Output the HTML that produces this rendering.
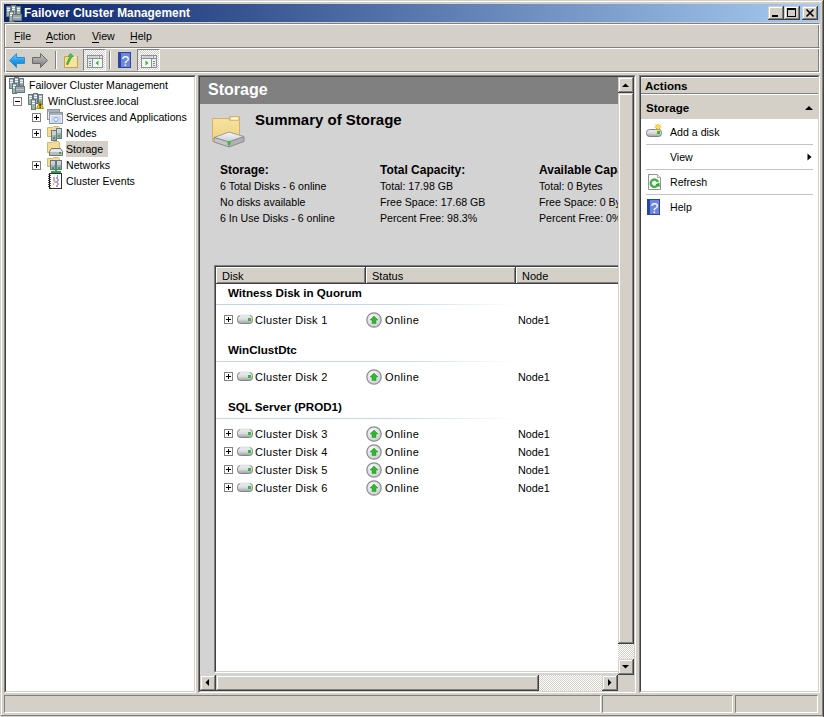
<!DOCTYPE html>
<html><head><meta charset="utf-8">
<style>
*{margin:0;padding:0;box-sizing:border-box}
html,body{width:824px;height:717px;overflow:hidden;background:#D4D0C8;font-family:"Liberation Sans",sans-serif;font-size:10.6px;color:#000}
.a{position:absolute}
.t{position:absolute;white-space:nowrap;line-height:12px}
.b{font-weight:bold;font-size:11.6px}
svg{position:absolute;overflow:visible}
.sunk{position:absolute;border:1px solid;border-color:#808080 #fff #fff #808080}
.sunk>.in{position:absolute;left:0;top:0;right:0;bottom:0;border:1px solid;border-color:#404040 #D4D0C8 #D4D0C8 #404040}
.btn{position:absolute;background:#D4D0C8;box-shadow:inset -1px -1px #404040,inset 1px 1px #D4D0C8,inset -2px -2px #808080,inset 2px 2px #fff}
.dith{background-color:#fff;background-image:linear-gradient(45deg,#D4D0C8 25%,transparent 25%,transparent 75%,#D4D0C8 75%),linear-gradient(45deg,#D4D0C8 25%,transparent 25%,transparent 75%,#D4D0C8 75%);background-size:2px 2px;background-position:0 0,1px 1px}
</style></head><body>
<!-- window frame -->
<div class="a" style="left:1px;top:1px;width:821px;height:1px;background:#fff"></div>
<div class="a" style="left:1px;top:1px;width:1px;height:714px;background:#fff"></div>
<div class="a" style="left:822px;top:1px;width:1px;height:715px;background:#808080"></div>
<div class="a" style="left:823px;top:0;width:1px;height:717px;background:#404040"></div>
<div class="a" style="left:1px;top:715px;width:822px;height:1px;background:#808080"></div>
<!-- title bar -->
<div class="a" style="left:4px;top:4px;width:816px;height:18px;background:linear-gradient(to right,#0A246A,#A6CAF0)"></div>
<div class="t" style="left:24px;top:5px;color:#fff;font-weight:bold;font-size:11.9px;line-height:16px">Failover Cluster Management</div>
<div class="btn" style="left:768px;top:6px;width:16px;height:14px"></div>
<div class="a" style="left:772px;top:15px;width:6px;height:2px;background:#000"></div>
<div class="btn" style="left:784px;top:6px;width:16px;height:14px"></div>
<div class="a" style="left:787px;top:8px;width:9px;height:9px;border:1px solid #000;border-top-width:2px"></div>
<div class="btn" style="left:802px;top:6px;width:16px;height:14px"></div>
<svg style="left:802px;top:6px" width="16" height="14"><path d="M4.5 3.5 L11.5 10.5 M11.5 3.5 L4.5 10.5" stroke="#000" stroke-width="1.6"/></svg>
<!-- title icon -->
<svg style="left:6px;top:5px" width="16" height="16">
<use href="#tower" x="0" y="1"/><use href="#tower" x="5" y="0"/><use href="#tower" x="10" y="1"/>
<use href="#tower" x="3" y="6"/>
<rect x="6.5" y="9.5" width="9" height="6" fill="#98A4AC" stroke="#687880"/>
<path d="M7 12.5h8" stroke="#C0C8CC"/>
</svg>
<!-- menu -->
<div class="t" style="left:14px;top:30px">File</div>
<div class="t" style="left:46px;top:30px">Action</div>
<div class="t" style="left:92px;top:30px">View</div>
<div class="t" style="left:130px;top:30px">Help</div>
<div class="a" style="left:14px;top:42px;width:6px;height:1px;background:#000"></div>
<div class="a" style="left:46px;top:42px;width:7px;height:1px;background:#000"></div>
<div class="a" style="left:92px;top:42px;width:7px;height:1px;background:#000"></div>
<div class="a" style="left:130px;top:42px;width:7px;height:1px;background:#000"></div>

<!-- menu band -->
<div class="a" style="left:4px;top:23px;width:816px;height:26px;border:1px solid;border-color:#808080 #fff #fff #808080;box-shadow:inset 1px 1px #fff,inset -1px -1px #808080"></div>
<div class="a" style="left:4px;top:47px;width:816px;height:26px;border:1px solid;border-color:#808080 #fff #fff #808080;box-shadow:inset 1px 1px #fff,inset -1px -1px #808080"></div>

<!-- toolbar -->
<svg style="left:0;top:0" width="1" height="1"><defs>
<linearGradient id="gblue" x1="0" y1="0" x2="0" y2="1"><stop offset="0" stop-color="#7CCBF5"/><stop offset="0.5" stop-color="#22A0EC"/><stop offset="1" stop-color="#0A70C8"/></linearGradient>
<linearGradient id="ggray" x1="0" y1="0" x2="0" y2="1"><stop offset="0" stop-color="#C8C8C8"/><stop offset="0.6" stop-color="#989898"/><stop offset="1" stop-color="#7A7A7A"/></linearGradient>
</defs></svg>
<svg style="left:0;top:0" width="824" height="80">
<path d="M9.5 60.5 L16.5 53.5 L16.5 57.5 L24.5 57.5 L24.5 63.5 L16.5 63.5 L16.5 67.5 Z" fill="url(#gblue)" stroke="#2F8FD8" stroke-width="1"/>
<path d="M47.5 60.5 L40.5 53.5 L40.5 57.5 L32.5 57.5 L32.5 63.5 L40.5 63.5 L40.5 67.5 Z" fill="url(#ggray)" stroke="#6A6A6A" stroke-width="1"/>
<rect x="55" y="51" width="1" height="18" fill="#808080"/><rect x="56" y="51" width="1" height="18" fill="#fff"/>
<rect x="109" y="51" width="1" height="18" fill="#808080"/><rect x="110" y="51" width="1" height="18" fill="#fff"/>
<!-- folder up -->
<path d="M64.5 56.5 L77.5 56.5 L77.5 67.5 L64.5 67.5 Z" fill="#F2D68A" stroke="#C8A050"/>
<path d="M65 59.5 L71 59.5 L72 58.5 L77 58.5 L77 67 L65 67 Z" fill="#F8E2A0"/>
<rect x="72.5" y="56" width="4" height="2" fill="#E8ECEC"/>
<path d="M66.5 64 C67.5 61 68.5 59 69.5 57.5 L68.5 56 L70.5 53.5 L73.5 56.5 L71.5 57 C70.5 59.5 69 62.5 67.5 65 Z" fill="#48C848" stroke="#2A9A2A" stroke-width="0.7"/>
<!-- help -->
<rect x="118" y="52" width="13" height="16" fill="#2A44A8"/>
<rect x="121" y="53" width="9" height="14" fill="#6C86DA"/>
<text x="125.5" y="66" font-family="Liberation Sans" font-size="14" fill="#fff" text-anchor="middle">?</text>
</svg>
<div class="a dith" style="left:83px;top:49px;width:23px;height:22px;border:1px solid;border-color:#808080 #fff #fff #808080"></div>
<div class="a dith" style="left:137px;top:49px;width:23px;height:22px;border:1px solid;border-color:#808080 #fff #fff #808080"></div>
<svg style="left:87px;top:55px" width="16" height="13">
<rect x="0.5" y="0.5" width="15" height="12" fill="#E8EAEC" stroke="#8C9196"/>
<rect x="1" y="3" width="14" height="1" fill="#8C9196"/>
<rect x="2" y="1.5" width="9" height="1" fill="#B8BCC0"/><rect x="12" y="1" width="1" height="2" fill="#8C9196"/>
<rect x="5" y="4" width="1" height="8" fill="#8C9196"/>
<rect x="2" y="6" width="2" height="1" fill="#8C9196"/><rect x="2" y="8" width="2" height="1" fill="#8C9196"/><rect x="2" y="10" width="2" height="1" fill="#8C9196"/>
<rect x="6" y="4" width="9" height="8" fill="#F4F8F4"/>
<path d="M8.5 8 L11.5 5.5 L11.5 10.5 Z" fill="#40B040"/>
</svg>
<svg style="left:141px;top:55px" width="16" height="13">
<rect x="0.5" y="0.5" width="15" height="12" fill="#E8EAEC" stroke="#8C9196"/>
<rect x="1" y="3" width="14" height="1" fill="#8C9196"/>
<rect x="2" y="1.5" width="9" height="1" fill="#B8BCC0"/><rect x="12" y="1" width="1" height="2" fill="#8C9196"/>
<rect x="10" y="4" width="1" height="8" fill="#8C9196"/>
<rect x="12" y="6" width="2" height="1" fill="#8C9196"/><rect x="12" y="8" width="2" height="1" fill="#8C9196"/><rect x="12" y="10" width="2" height="1" fill="#8C9196"/>
<rect x="1" y="4" width="9" height="8" fill="#F4F8F4"/>
<path d="M7.5 8 L4.5 5.5 L4.5 10.5 Z" fill="#40B040"/>
</svg>
<!-- left pane -->
<div class="sunk" style="left:4px;top:75px;width:192px;height:618px"><div class="in" style="background:#fff"></div></div>
<!-- tree -->
<svg style="left:0;top:0" width="1" height="1"><defs>
<linearGradient id="twr" x1="0" y1="0" x2="1" y2="1"><stop offset="0" stop-color="#B8C4C8"/><stop offset="1" stop-color="#8C9CA4"/></linearGradient>
<g id="tower"><rect x="0.5" y="0.5" width="4" height="10" fill="url(#twr)" stroke="#687880"/><path d="M1 2.5h3M1 4.5h3" stroke="#F4F8F8"/><rect x="1" y="7" width="3" height="3" fill="#98B898"/></g>
</defs></svg>
<svg style="left:9px;top:77px" width="16" height="16">
<use href="#tower" x="0" y="1"/><use href="#tower" x="5" y="0"/><use href="#tower" x="10" y="1"/>
<use href="#tower" x="3" y="6"/>
<rect x="6.5" y="9.5" width="9" height="6" fill="#98A4AC" stroke="#687880"/>
<path d="M8 9.5 L9.5 8 L12.5 8 L14 9.5" fill="none" stroke="#687880"/>
<path d="M7 12.5h8" stroke="#C0C8CC"/>
</svg>
<div class="t" style="left:29px;top:79px">Failover Cluster Management</div>
<div class="a" style="left:13px;top:97px;width:9px;height:9px;border:1px solid #808080;background:#fff"></div>
<div class="a" style="left:15px;top:101px;width:5px;height:1px;background:#000"></div>
<svg style="left:28px;top:93px" width="16" height="16">
<use href="#tower" x="0" y="1"/><use href="#tower" x="5" y="0"/><use href="#tower" x="10" y="1"/>
<use href="#tower" x="3" y="6"/>
<path d="M8.5 15.5 L12 8.5 L15.5 15.5 Z" fill="#F0D830" stroke="#B09000"/>
<rect x="11.5" y="10.5" width="1.2" height="3" fill="#000"/><rect x="11.5" y="14" width="1.2" height="1" fill="#000"/>
</svg>
<div class="t" style="left:48px;top:95px">WinClust.sree.local</div>
<div class="a" style="left:32px;top:113px;width:9px;height:9px;border:1px solid #808080;background:#fff"></div>
<div class="a" style="left:34px;top:117px;width:5px;height:1px;background:#000"></div><div class="a" style="left:36px;top:115px;width:1px;height:5px;background:#000"></div>
<svg style="left:47px;top:109px" width="16" height="16">
<rect x="0.5" y="0.5" width="12" height="10" fill="#E4E8EC" stroke="#8C949C"/>
<rect x="1" y="1" width="11" height="2" fill="#A8B0B8"/>
<rect x="2.5" y="3.5" width="13" height="11" fill="#EEF2F6" stroke="#8C949C"/>
<rect x="3" y="4" width="12" height="2" fill="#A8B0B8"/>
<rect x="4" y="7" width="10" height="7" fill="#C8D8F0"/>
<path d="M9 8 L11 10.5 L9 13 L7 10.5 Z" fill="#fff" stroke="#6890C8" stroke-width="0.8"/>
</svg>
<div class="t" style="left:66px;top:111px">Services and Applications</div>
<div class="a" style="left:32px;top:129px;width:9px;height:9px;border:1px solid #808080;background:#fff"></div>
<div class="a" style="left:34px;top:133px;width:5px;height:1px;background:#000"></div><div class="a" style="left:36px;top:131px;width:1px;height:5px;background:#000"></div>
<svg style="left:47px;top:125px" width="16" height="16">
<path d="M0.5 2.5 L5.5 2.5 L6.5 1.5 L11.5 1.5 L12.5 2.5 L12.5 11.5 L0.5 11.5 Z" fill="#F4DC98" stroke="#D8B868"/>
<rect x="4.5" y="5.5" width="5" height="10" fill="url(#twr)" stroke="#687880"/>
<rect x="9.5" y="3.5" width="5" height="10" fill="url(#twr)" stroke="#687880"/>
<path d="M5 7h4M10 5h4M5 9h4M10 7h4" stroke="#F0F0F0"/>
<rect x="6" y="12" width="2" height="2" fill="#30B030"/><rect x="11" y="10" width="2" height="2" fill="#30B030"/>
</svg>
<div class="t" style="left:66px;top:127px">Nodes</div>
<div class="a" style="left:66px;top:141px;width:42px;height:16px;background:#D4D0C8"></div>
<svg style="left:47px;top:141px" width="16" height="16">
<path d="M0.5 1.5 L5.5 1.5 L6.5 0.5 L11.5 0.5 L12.5 1.5 L12.5 11.5 L0.5 11.5 Z" fill="#F4DC98" stroke="#D8B868"/>
<path d="M2.5 10.5 L4.5 7.5 L13.5 7.5 L15.5 10.5 L15.5 14.5 L2.5 14.5 Z" fill="#E4E6E8" stroke="#70747A"/>
<rect x="3" y="11" width="12" height="3" fill="#B8BCC0"/>
<rect x="12" y="11" width="2" height="2" fill="#30B030"/>
</svg>
<div class="t" style="left:66px;top:143px">Storage</div>
<div class="a" style="left:32px;top:161px;width:9px;height:9px;border:1px solid #808080;background:#fff"></div>
<div class="a" style="left:34px;top:165px;width:5px;height:1px;background:#000"></div><div class="a" style="left:36px;top:163px;width:1px;height:5px;background:#000"></div>
<svg style="left:47px;top:157px" width="16" height="16">
<path d="M0.5 1.5 L5.5 1.5 L6.5 0.5 L11.5 0.5 L12.5 1.5 L12.5 9.5 L0.5 9.5 Z" fill="#F4DC98" stroke="#D8B868"/>
<rect x="3.5" y="3.5" width="5" height="9" fill="url(#twr)" stroke="#687880"/>
<rect x="9.5" y="3.5" width="5" height="9" fill="url(#twr)" stroke="#687880"/>
<path d="M4 5h4M10 5h4M4 7h4M10 7h4" stroke="#F0F0F0"/>
<rect x="5" y="10" width="2" height="2" fill="#30B030"/><rect x="11" y="10" width="2" height="2" fill="#30B030"/>
<rect x="8" y="12" width="2" height="3" fill="#30A050"/><rect x="4" y="14" width="10" height="2" fill="#30A050"/>
</svg>
<div class="t" style="left:66px;top:159px">Networks</div>
<svg style="left:47px;top:173px" width="16" height="16">
<rect x="2.5" y="0.5" width="12" height="15" fill="#fff" stroke="#303030"/>
<path d="M1.5 1.5 L3.5 2.5 L1.5 3.5 L3.5 4.5 L1.5 5.5 L3.5 6.5 L1.5 7.5 L3.5 8.5 L1.5 9.5 L3.5 10.5 L1.5 11.5 L3.5 12.5 L1.5 13.5 L3.5 14.5" stroke="#101010" fill="none"/>
<path d="M6 5h2M6 7h2M7 9h2M6 11h1" stroke="#D04848"/>
<path d="M10 3h1M9 5h2M10 7h2" stroke="#3048C8"/>
<path d="M9 9h2M10 11h2M9 13h2" stroke="#8030A0"/>
</svg>
<div class="t" style="left:66px;top:175px">Cluster Events</div>
<!-- center pane -->
<div class="sunk" style="left:198px;top:75px;width:438px;height:618px"><div class="in" style="background:#D3D3D3"></div></div>
<!-- center content -->
<div class="a" style="left:200px;top:77px;width:418px;height:27px;background:#808080"></div>
<div class="t" style="left:208px;top:81px;color:#fff;font-weight:bold;font-size:16px;line-height:18px">Storage</div>
<svg style="left:212px;top:114px" width="32" height="34">
<defs><linearGradient id="fold" x1="0" y1="0" x2="0" y2="1"><stop offset="0" stop-color="#F6E2A0"/><stop offset="1" stop-color="#F0D080"/></linearGradient>
<linearGradient id="disk" x1="0" y1="0" x2="0" y2="1"><stop offset="0" stop-color="#F8F8F8"/><stop offset="1" stop-color="#C8CACC"/></linearGradient></defs>
<path d="M0.5 4.5 L16.5 4.5 L18 6.5 L27.5 6.5 L27.5 27.5 L0.5 27.5 Z" fill="url(#fold)" stroke="#D8B060"/>
<path d="M17.5 6.5 L17.5 2.5 L27.5 2.5 L27.5 6.5" fill="#E8C878" stroke="#D8B060"/>
<rect x="19" y="3.5" width="7" height="2" fill="#fff"/>
<path d="M2 23.5 L17 18 L32 22.5 L17 28 Z" fill="url(#disk)" stroke="#9C9EA2"/>
<path d="M2 23.5 L17 28 L17 33 L2 28 Z" fill="#C4C6C8" stroke="#8A8C90"/>
<path d="M17 28 L32 22.5 L32 27.5 L17 33 Z" fill="#B0B2B6" stroke="#8A8C90"/>
<rect x="15.5" y="27" width="3" height="4" rx="1" fill="#30C030"/>
</svg>
<div class="t" style="left:255px;top:112px;font-weight:bold;font-size:15px;line-height:15px">Summary of Storage</div>
<div class="t b" style="left:220px;top:164px;font-size:12px">Storage:</div>
<div class="t" style="left:220px;top:180px">6 Total Disks - 6 online</div>
<div class="t" style="left:220px;top:196px">No disks available</div>
<div class="t" style="left:220px;top:212px">6 In Use Disks - 6 online</div>
<div class="t b" style="left:380px;top:164px;font-size:12px">Total Capacity:</div>
<div class="t" style="left:380px;top:180px">Total: 17.98 GB</div>
<div class="t" style="left:380px;top:196px">Free Space: 17.68 GB</div>
<div class="t" style="left:380px;top:212px">Percent Free: 98.3%</div>
<div class="a" style="left:538px;top:160px;width:80px;height:70px;overflow:hidden">
<div class="t b" style="left:1px;top:4px;font-size:12px">Available Capacity:</div>
<div class="t" style="left:1px;top:20px">Total: 0 Bytes</div>
<div class="t" style="left:1px;top:36px">Free Space: 0 Bytes</div>
<div class="t" style="left:1px;top:52px">Percent Free: 0%</div>
</div>
<!-- list view -->
<div class="a" style="left:214px;top:265px;width:404px;height:408px;overflow:hidden">
 <div class="a" style="left:0;top:0;width:420px;height:408px;border:1px solid;border-color:#808080 #fff #fff #808080"><div class="a" style="left:0;top:0;right:0;bottom:0;border:1px solid;border-color:#404040 #D4D0C8 #D4D0C8 #404040;background:#fff"></div></div>
 <svg style="left:0;top:0" width="1" height="1"><defs>
<linearGradient id="dskg" x1="0" y1="0" x2="0" y2="1"><stop offset="0" stop-color="#F0F0F0"/><stop offset="0.5" stop-color="#D8DADC"/><stop offset="1" stop-color="#9CA0A4"/></linearGradient>
<g id="dsk"><rect x="0.5" y="1.5" width="15" height="8" rx="3" fill="url(#dskg)" stroke="#808488"/><rect x="3" y="0.5" width="10" height="2" rx="1" fill="#E0E2E4"/><rect x="11" y="4" width="3" height="3" fill="#3CB43C"/></g>
<radialGradient id="onlg" cx="0.4" cy="0.35" r="0.7"><stop offset="0" stop-color="#FFFFFF"/><stop offset="1" stop-color="#C8CACC"/></radialGradient>
<g id="onl"><circle cx="8" cy="8" r="7.2" fill="url(#onlg)" stroke="#8A8C8E" stroke-width="1.2"/><path d="M8 4 L12 8 L10 8 L10 11.5 L6 11.5 L6 8 L4 8 Z" fill="#2EB82E" stroke="#1E981E" stroke-width="0.5"/></g>
</defs></svg><div class="a" style="left:2px;top:2px;width:150px;height:17px;background:#D4D0C8;box-shadow:inset -1px -1px #404040,inset 1px 1px #fff,inset -2px -2px #808080"></div>
<div class="t" style="left:8px;top:5px;font-size:11px">Disk</div>
<div class="a" style="left:152px;top:2px;width:150px;height:17px;background:#D4D0C8;box-shadow:inset -1px -1px #404040,inset 1px 1px #fff,inset -2px -2px #808080"></div>
<div class="t" style="left:158px;top:5px;font-size:11px">Status</div>
<div class="a" style="left:302px;top:2px;width:150px;height:17px;background:#D4D0C8;box-shadow:inset -1px -1px #404040,inset 1px 1px #fff,inset -2px -2px #808080"></div>
<div class="t" style="left:308px;top:5px;font-size:11px">Node</div>
<div class="t b" style="left:14px;top:22px">Witness Disk in Quorum</div><div class="a" style="left:2px;top:39px;width:300px;height:1px;background:linear-gradient(to right,#C4D4E4 0%,#C8D8E8 60%,#fff 100%)"></div>
<div class="a" style="left:10px;top:50px;width:9px;height:9px;border:1px solid #808080;background:#fff"></div><div class="a" style="left:12px;top:54px;width:5px;height:1px;background:#000"></div><div class="a" style="left:14px;top:52px;width:1px;height:5px;background:#000"></div><svg style="left:23px;top:49px" width="16" height="10"><use href="#dsk"/></svg><div class="t" style="left:41px;top:49px;font-size:11px;letter-spacing:0.3px">Cluster Disk 1</div><svg style="left:152px;top:47px" width="16" height="16"><use href="#onl"/></svg><div class="t" style="left:171px;top:49px;font-size:11px;letter-spacing:0.4px">Online</div><div class="t" style="left:304px;top:49px;font-size:10.8px">Node1</div>
<div class="t b" style="left:14px;top:79px">WinClustDtc</div><div class="a" style="left:2px;top:96px;width:300px;height:1px;background:linear-gradient(to right,#C4D4E4 0%,#C8D8E8 60%,#fff 100%)"></div>
<div class="a" style="left:10px;top:107px;width:9px;height:9px;border:1px solid #808080;background:#fff"></div><div class="a" style="left:12px;top:111px;width:5px;height:1px;background:#000"></div><div class="a" style="left:14px;top:109px;width:1px;height:5px;background:#000"></div><svg style="left:23px;top:106px" width="16" height="10"><use href="#dsk"/></svg><div class="t" style="left:41px;top:106px;font-size:11px;letter-spacing:0.3px">Cluster Disk 2</div><svg style="left:152px;top:104px" width="16" height="16"><use href="#onl"/></svg><div class="t" style="left:171px;top:106px;font-size:11px;letter-spacing:0.4px">Online</div><div class="t" style="left:304px;top:106px;font-size:10.8px">Node1</div>
<div class="t b" style="left:14px;top:136px">SQL Server (PROD1)</div><div class="a" style="left:2px;top:153px;width:300px;height:1px;background:linear-gradient(to right,#C4D4E4 0%,#C8D8E8 60%,#fff 100%)"></div>
<div class="a" style="left:10px;top:164px;width:9px;height:9px;border:1px solid #808080;background:#fff"></div><div class="a" style="left:12px;top:168px;width:5px;height:1px;background:#000"></div><div class="a" style="left:14px;top:166px;width:1px;height:5px;background:#000"></div><svg style="left:23px;top:163px" width="16" height="10"><use href="#dsk"/></svg><div class="t" style="left:41px;top:163px;font-size:11px;letter-spacing:0.3px">Cluster Disk 3</div><svg style="left:152px;top:161px" width="16" height="16"><use href="#onl"/></svg><div class="t" style="left:171px;top:163px;font-size:11px;letter-spacing:0.4px">Online</div><div class="t" style="left:304px;top:163px;font-size:10.8px">Node1</div>
<div class="a" style="left:10px;top:182px;width:9px;height:9px;border:1px solid #808080;background:#fff"></div><div class="a" style="left:12px;top:186px;width:5px;height:1px;background:#000"></div><div class="a" style="left:14px;top:184px;width:1px;height:5px;background:#000"></div><svg style="left:23px;top:181px" width="16" height="10"><use href="#dsk"/></svg><div class="t" style="left:41px;top:181px;font-size:11px;letter-spacing:0.3px">Cluster Disk 4</div><svg style="left:152px;top:179px" width="16" height="16"><use href="#onl"/></svg><div class="t" style="left:171px;top:181px;font-size:11px;letter-spacing:0.4px">Online</div><div class="t" style="left:304px;top:181px;font-size:10.8px">Node1</div>
<div class="a" style="left:10px;top:200px;width:9px;height:9px;border:1px solid #808080;background:#fff"></div><div class="a" style="left:12px;top:204px;width:5px;height:1px;background:#000"></div><div class="a" style="left:14px;top:202px;width:1px;height:5px;background:#000"></div><svg style="left:23px;top:199px" width="16" height="10"><use href="#dsk"/></svg><div class="t" style="left:41px;top:199px;font-size:11px;letter-spacing:0.3px">Cluster Disk 5</div><svg style="left:152px;top:197px" width="16" height="16"><use href="#onl"/></svg><div class="t" style="left:171px;top:199px;font-size:11px;letter-spacing:0.4px">Online</div><div class="t" style="left:304px;top:199px;font-size:10.8px">Node1</div>
<div class="a" style="left:10px;top:218px;width:9px;height:9px;border:1px solid #808080;background:#fff"></div><div class="a" style="left:12px;top:222px;width:5px;height:1px;background:#000"></div><div class="a" style="left:14px;top:220px;width:1px;height:5px;background:#000"></div><svg style="left:23px;top:217px" width="16" height="10"><use href="#dsk"/></svg><div class="t" style="left:41px;top:217px;font-size:11px;letter-spacing:0.3px">Cluster Disk 6</div><svg style="left:152px;top:215px" width="16" height="16"><use href="#onl"/></svg><div class="t" style="left:171px;top:217px;font-size:11px;letter-spacing:0.4px">Online</div><div class="t" style="left:304px;top:217px;font-size:10.8px">Node1</div>
</div>
<!-- scrollbars -->
<div class="a" style="left:618px;top:77px;width:16px;height:598px;background:#D4D0C8"></div>
<div class="btn" style="left:618px;top:77px;width:16px;height:16px"></div>
<svg style="left:618px;top:77px" width="16" height="16"><path d="M4 10 L11 10 L7.5 6.5 Z" fill="#000"/></svg>
<div class="btn" style="left:618px;top:93px;width:16px;height:551px"></div>
<div class="a dith" style="left:618px;top:644px;width:16px;height:15px"></div>
<div class="btn" style="left:618px;top:659px;width:16px;height:16px"></div>
<svg style="left:618px;top:659px" width="16" height="16"><path d="M4 6 L11 6 L7.5 9.5 Z" fill="#000"/></svg>
<div class="a dith" style="left:216px;top:675px;width:386px;height:16px"></div>
<div class="btn" style="left:200px;top:675px;width:16px;height:16px"></div>
<svg style="left:200px;top:675px" width="16" height="16"><path d="M9 4 L9 11 L5.5 7.5 Z" fill="#000"/></svg>
<div class="btn" style="left:216px;top:675px;width:323px;height:16px"></div>
<div class="btn" style="left:602px;top:675px;width:16px;height:16px"></div>
<svg style="left:602px;top:675px" width="16" height="16"><path d="M6 4 L6 11 L9.5 7.5 Z" fill="#000"/></svg>
<div class="a" style="left:618px;top:675px;width:16px;height:16px;background:#D4D0C8"></div>
<!-- actions pane -->
<div class="sunk" style="left:639px;top:75px;width:181px;height:618px"><div class="in" style="background:#fff"></div></div>
<!-- actions content -->
<div class="a" style="left:641px;top:77px;width:177px;height:17px;background:#D4D0C8;box-shadow:inset 0 1px #fff,inset 0 -1px #808080"></div>
<div class="a" style="left:641px;top:94px;width:177px;height:1px;background:#fff"></div>
<div class="t b" style="left:645px;top:80px">Actions</div>
<div class="a" style="left:641px;top:95px;width:177px;height:24px;background:#D4D0C8"></div>
<div class="t b" style="left:646px;top:102px">Storage</div>
<svg style="left:804px;top:104px" width="10" height="8"><path d="M1 6 L9 6 L5 2 Z" fill="#000"/></svg>
<svg style="left:645px;top:123px" width="18" height="14">
<rect x="1.5" y="6.5" width="15" height="7" rx="3" fill="url(#dskg)" stroke="#808488"/><rect x="12" y="8" width="3" height="3" fill="#3CB43C"/>
<g stroke="#F0A800" stroke-width="1"><path d="M13 0.5 L13 7.5 M9.5 4 L16.5 4 M10.5 1.5 L15.5 6.5 M15.5 1.5 L10.5 6.5"/></g><circle cx="13" cy="4" r="1.8" fill="#FFE040"/>
</svg>
<div class="t" style="left:670px;top:126px">Add a disk</div>
<div class="a" style="left:646px;top:144px;width:167px;height:1px;background:#C4C4C4"></div>
<div class="t" style="left:670px;top:151px">View</div>
<svg style="left:804px;top:152px" width="10" height="10"><path d="M3.5 1.5 L7.5 5 L3.5 8.5 Z" fill="#000"/></svg>
<div class="a" style="left:646px;top:169px;width:167px;height:1px;background:#C4C4C4"></div>
<svg style="left:647px;top:174px" width="16" height="16">
<path d="M1.5 0.5 L10.5 0.5 L13.5 3.5 L13.5 15.5 L1.5 15.5 Z" fill="#fff" stroke="#909498"/>
<path d="M10.5 0.5 L10.5 3.5 L13.5 3.5" fill="#F0F0F0" stroke="#A8ACB0"/>
<path d="M10.6 11.2 A3.7 3.7 0 1 1 11 8.2" fill="none" stroke="#40B040" stroke-width="2.4"/>
<path d="M8.5 10.5 L12.8 13.2 L12.5 8.5 Z" fill="#30A030"/>
</svg>
<div class="t" style="left:670px;top:176px">Refresh</div>
<div class="a" style="left:646px;top:194px;width:167px;height:1px;background:#C4C4C4"></div>
<svg style="left:647px;top:199px" width="14" height="16">
<rect x="0" y="0" width="13" height="16" fill="#2A44A8"/>
<rect x="3" y="1" width="9" height="14" fill="#6C86DA"/>
<text x="7.5" y="13.5" font-family="Liberation Sans" font-size="14" fill="#fff" text-anchor="middle">?</text>
</svg>
<div class="t" style="left:670px;top:201px">Help</div>
<!-- status bar -->
<div class="a" style="left:4px;top:695px;width:597px;height:18px;border:1px solid;border-color:#808080 #fff #fff #808080"></div>
<div class="a" style="left:602px;top:695px;width:131px;height:18px;border:1px solid;border-color:#808080 #fff #fff #808080"></div>
<div class="a" style="left:735px;top:695px;width:83px;height:18px;border:1px solid;border-color:#808080 #fff #fff #808080"></div>
</body></html>
